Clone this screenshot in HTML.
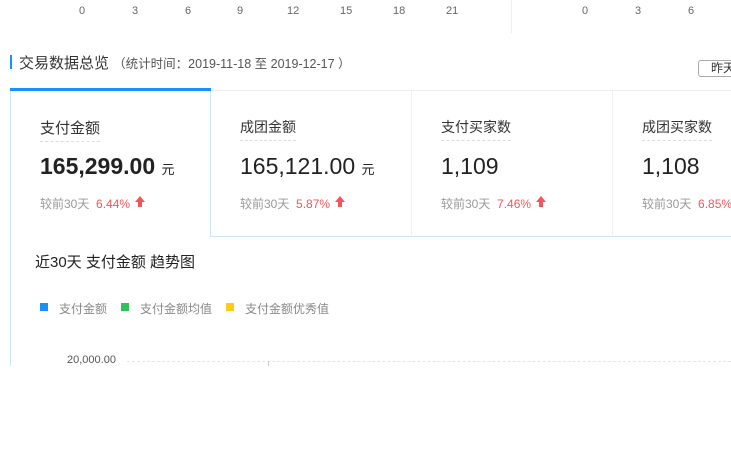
<!DOCTYPE html>
<html><head><meta charset="utf-8"><style>
body{margin:0;width:731px;height:451px;overflow:hidden;background:#fff;font-family:"Liberation Sans","Noto Sans CJK SC",sans-serif;position:relative}
.a{position:absolute;white-space:nowrap}
.ax{font-size:11px;color:#666;top:5px}
.t{font-size:14px;color:#333;border-bottom:1px dashed #ddd;padding-bottom:3px}
.v{font-size:23px;color:#222}
.c{font-size:12px;color:#999}
.p{font-size:12px;color:#f5555a}
.arr{width:0;height:0;border-left:5px solid transparent;border-right:5px solid transparent;border-bottom:6px solid #f5555a}
.arrs{width:4px;height:5px;background:#f5555a}
</style></head><body>
<div class="a ax" style="left:79px">0</div>
<div class="a ax" style="left:132px">3</div>
<div class="a ax" style="left:185px">6</div>
<div class="a ax" style="left:237px">9</div>
<div class="a ax" style="left:287px">12</div>
<div class="a ax" style="left:340px">15</div>
<div class="a ax" style="left:393px">18</div>
<div class="a ax" style="left:446px">21</div>
<div class="a" style="left:511px;top:0;width:1px;height:33px;background:#eee"></div>
<div class="a ax" style="left:582px">0</div>
<div class="a ax" style="left:635px">3</div>
<div class="a ax" style="left:688px">6</div>

<div class="a" style="left:10px;top:55px;width:2px;height:14px;background:#1890ff"></div>
<div class="a" style="left:19px;top:52px;font-size:15px;color:#333">交易数据总览 <span style="font-size:12.5px;color:#555">（统计时间：2019-11-18 至 2019-12-17 ）</span></div>
<div class="a" style="left:698px;top:60px;width:40px;height:15px;border:1px solid #aaa;border-radius:3px;font-size:12px;color:#333;line-height:15px;padding-left:12px">昨天</div>

<div class="a" style="left:10px;top:90px;width:721px;height:145px;border-top:1px solid #eee;border-bottom:1px solid #cfe6f8"></div>
<div class="a" style="left:411px;top:91px;width:1px;height:144px;background:#eee"></div>
<div class="a" style="left:612px;top:91px;width:1px;height:144px;background:#eee"></div>
<div class="a" style="left:10px;top:88px;width:201px;height:3px;background:#1890ff"></div>
<div class="a" style="left:10px;top:91px;width:1px;height:275px;background:#cfe6f8"></div>
<div class="a" style="left:210px;top:91px;width:1px;height:145px;background:#cfe6f8"></div>
<div class="a" style="left:11px;top:235px;width:199px;height:2px;background:#fff"></div>

<div class="a t" style="left:40px;top:117px;font-size:15px">支付金额</div>
<div class="a v" style="left:40px;top:153px;font-weight:bold">165,299.00 <span style="font-size:13px;font-weight:normal">元</span></div>
<div class="a c" style="left:40px;top:195px">较前30天 <span class="p">&nbsp;6.44%</span></div>
<div class="a arr" style="left:135px;top:196px"></div><div class="a arrs" style="left:138px;top:202px"></div>

<div class="a t" style="left:240px;top:117px">成团金额</div>
<div class="a v" style="left:240px;top:153px">165,121.00 <span style="font-size:13px">元</span></div>
<div class="a c" style="left:240px;top:195px">较前30天 <span class="p">&nbsp;5.87%</span></div>
<div class="a arr" style="left:335px;top:196px"></div><div class="a arrs" style="left:338px;top:202px"></div>

<div class="a t" style="left:441px;top:117px">支付买家数</div>
<div class="a v" style="left:441px;top:153px">1,109</div>
<div class="a c" style="left:441px;top:195px">较前30天 <span class="p">&nbsp;7.46%</span></div>
<div class="a arr" style="left:536px;top:196px"></div><div class="a arrs" style="left:539px;top:202px"></div>

<div class="a t" style="left:642px;top:117px">成团买家数</div>
<div class="a v" style="left:642px;top:153px">1,108</div>
<div class="a c" style="left:642px;top:195px">较前30天 <span class="p">&nbsp;6.85%</span></div>

<div class="a" style="left:35px;top:251px;font-size:15px;color:#222">近30天 支付金额 趋势图</div>
<div class="a" style="left:40px;top:303px;width:8px;height:8px;background:#1890ff"></div>
<div class="a c" style="left:59px;top:300px;color:#888">支付金额</div>
<div class="a" style="left:121px;top:303px;width:8px;height:8px;background:#2fc25b"></div>
<div class="a c" style="left:140px;top:300px;color:#888">支付金额均值</div>
<div class="a" style="left:226px;top:303px;width:8px;height:8px;background:#facc14"></div>
<div class="a c" style="left:245px;top:300px;color:#888">支付金额优秀值</div>
<div class="a" style="left:67px;top:354px;font-size:11px;color:#555">20,000.00</div>
<div class="a" style="left:127px;top:361px;width:604px;border-top:1px dashed #e5e5e5"></div>
<div class="a" style="left:268px;top:361px;width:1px;height:5px;background:#ccc"></div>
</body></html>
